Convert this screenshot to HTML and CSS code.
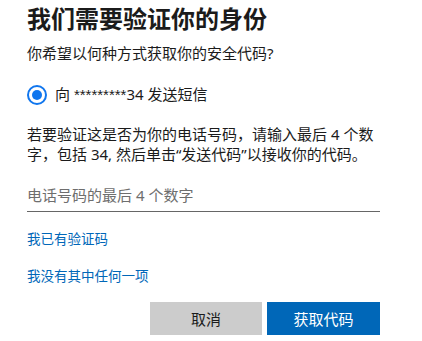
FILE: index.html
```html
<!DOCTYPE html>
<html lang="zh-CN">
<head>
<meta charset="utf-8">
<link rel="stylesheet" href="styles.css">
</head>
<body>
<div class="panel">
  <h1 class="title">我们需要验证你的身份</h1>
  <p class="subtitle">你希望以何种方式获取你的安全代码?</p>
  <label class="option">
    <span class="radio"><span class="dot"></span></span>
    <span class="option-text">向 <span class="mask">*********</span>34 发送短信</span>
  </label>
  <p class="desc">若要验证这是否为你的电话号码，请输入最后 4 个数字，包括 34, 然后单击“发送代码”以接收你的代码。</p>
  <div class="field"><span class="placeholder">电话号码的最后 4 个数字</span></div>
  <a class="link link-first">我已有验证码</a>
  <a class="link link-second">我没有其中任何一项</a>
  <div class="actions">
    <button class="btn btn-secondary">取消</button>
    <button class="btn btn-primary">获取代码</button>
  </div>
</div>
</body>
</html>
```
FILE: styles.css
```css
html, body {
  margin: 0;
  padding: 0;
  background: #ffffff;
}
body {
  font-family: "Noto Sans", "Noto Sans CJK SC", sans-serif;
  color: #1b1b1b;
}
.panel {
  width: 353px;
  padding: 3px 0 0 27px;
  display: flex;
  flex-direction: column;
}
.title {
  margin: 0;
  font-size: 24px;
  line-height: 32px;
  font-weight: 700;
}
.subtitle {
  margin: 8px 0 0;
  font-size: 15px;
  line-height: 20px;
}
.option {
  margin-top: 20px;
  display: flex;
  align-items: center;
  height: 24px;
}
.radio {
  width: 16px;
  height: 16px;
  border: 2px solid #1076ee;
  border-radius: 50%;
  display: flex;
  align-items: center;
  justify-content: center;
  box-sizing: content-box;
}
.dot {
  width: 10px;
  height: 10px;
  border-radius: 50%;
  background: #1076ee;
}
.option-text {
  margin-left: 8px;
  font-size: 15px;
  line-height: 20px;
  position: relative;
  top: -1px;
}
.mask {
  font-family: "Liberation Sans", sans-serif;
}
.desc {
  margin: 17px 0 0;
  font-size: 15px;
  line-height: 20px;
}
.field {
  margin-top: 21px;
  height: 26px;
  border-bottom: 1px solid #666666;
  font-size: 15px;
  line-height: 20px;
}
.placeholder {
  color: #6e6e6e;
}
.link {
  font-size: 13.5px;
  line-height: 18px;
  color: #0067b8;
  text-decoration: none;
}
.link-first {
  margin-top: 18px;
}
.link-second {
  margin-top: 19px;
}
.actions {
  margin-top: 17px;
  display: flex;
  justify-content: flex-end;
  gap: 5px;
}
.btn {
  border: none;
  width: 112px;
  height: 33px;
  font-family: "Noto Sans", "Noto Sans CJK SC", sans-serif;
  font-size: 15px;
  line-height: 20px;
  padding: 0;
}
.btn-secondary {
  background: #cccccc;
  color: #1b1b1b;
}
.btn-primary {
  width: 113px;
  background: #0067b8;
  color: #ffffff;
}
```
